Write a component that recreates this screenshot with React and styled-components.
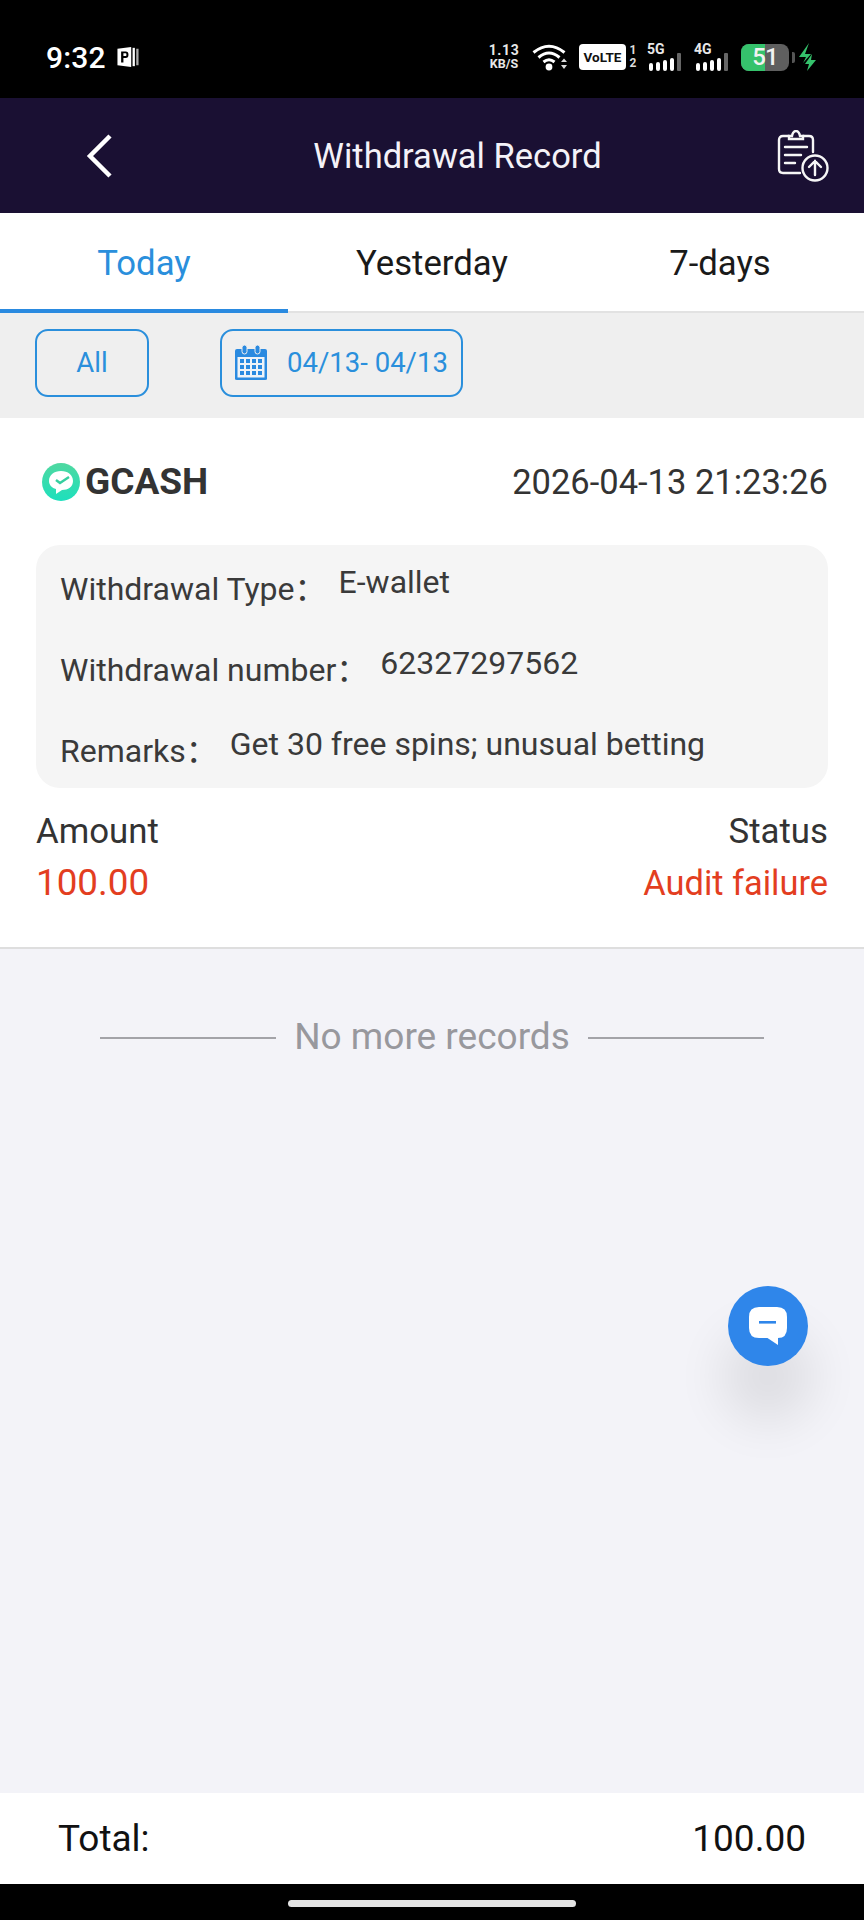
import styled, { createGlobalStyle } from "styled-components";

const GlobalStyle = createGlobalStyle`
  html, body {
    margin: 0;
    padding: 0;
    background: #000;
  }
  body {
    font-family: Roboto, "Noto Sans CJK SC", sans-serif;
  }
`;

const Page = styled.div`
  position: relative;
  display: flex;
  flex-direction: column;
  width: 864px;
  height: 1920px;
  overflow: hidden;
  background: #f3f3f8;
`;

const StatusBar = styled.div`
  display: flex;
  align-items: center;
  justify-content: space-between;
  height: 98px;
  padding: 16px 48px 0 46px;
  box-sizing: border-box;
  background: #000;
  color: #fff;
`;

const StatusLeft = styled.div`
  display: flex;
  align-items: center;
  gap: 10px;
`;

const Clock = styled.span`
  font-size: 30px;
  font-weight: 500;
  letter-spacing: 0.2px;
`;

const StatusRight = styled.div`
  display: flex;
  align-items: center;
`;

const NetSpeed = styled.div`
  display: flex;
  flex-direction: column;
  align-items: center;
  width: 30px;
  margin-right: 13px;
  font-weight: 700;
  color: #e8e8e8;
  line-height: 14px;
  span:first-child {
    font-size: 14px;
    letter-spacing: 0.6px;
  }
  span:last-child {
    font-size: 12.5px;
    white-space: nowrap;
  }
`;

const Volte = styled.span`
  display: flex;
  align-items: center;
  justify-content: center;
  width: 47px;
  height: 26px;
  margin-left: 11px;
  border-radius: 4px;
  background: #fff;
  color: #111;
  font-size: 13.5px;
  font-weight: 700;
`;

const SimNumbers = styled.div`
  display: flex;
  flex-direction: column;
  align-items: center;
  width: 10px;
  margin: 0 9px 0 2px;
  font-size: 12px;
  line-height: 13px;
  font-weight: 700;
  color: #ddd;
`;

const Signal = styled.div`
  position: relative;
  width: 35px;
  height: 28px;
  margin-right: 12px;
`;

const SignalLabel = styled.span`
  position: absolute;
  left: 0;
  top: -1px;
  font-size: 14px;
  line-height: 14px;
  font-weight: 700;
  color: #e8e8e8;
`;

const Battery = styled.div`
  position: relative;
  display: flex;
  align-items: center;
  justify-content: center;
  width: 48px;
  height: 27px;
  overflow: hidden;
  border-radius: 8px;
  background: #5f5f5f;
  color: #f2f2f2;
  font-size: 24px;
  font-weight: 500;
  letter-spacing: -1px;
`;

const BatteryFill = styled.div`
  position: absolute;
  left: 0;
  top: 0;
  bottom: 0;
  background: #35c26c;
`;

const BatteryText = styled.span`
  position: relative;
`;

const BatteryCap = styled.div`
  width: 3px;
  height: 11px;
  margin: 0 3px 0 3px;
  border-radius: 0 2px 2px 0;
  background: #555;
`;

const Header = styled.header`
  display: grid;
  grid-template-columns: 1fr auto 1fr;
  align-items: center;
  height: 115px;
  padding: 0 35px 0 86px;
  box-sizing: border-box;
  background: #1a1033;
  color: #fff;
`;

const HeaderTitle = styled.h1`
  margin: 0;
  font-size: 34.5px;
  font-weight: 400;
  color: #f4f2f8;
`;

const HeaderAction = styled.div`
  display: flex;
  justify-content: flex-end;
`;

const Tabs = styled.nav`
  display: flex;
  height: 100px;
  box-sizing: border-box;
  background: #fff;
  border-bottom: 2px solid #e2e2e2;
`;

const Tab = styled.div`
  position: relative;
  flex: 1;
  display: flex;
  align-items: center;
  justify-content: center;
  padding-top: 1px;
  font-size: 34.7px;
  color: ${(props) => (props.$active ? "#2a8fdc" : "#1a1a1a")};
  ${(props) =>
    props.$active &&
    `
    &::after {
      content: "";
      position: absolute;
      left: 0;
      right: 0;
      bottom: -2px;
      height: 4px;
      background: #2a8ae0;
    }
  `}
`;

const FilterBar = styled.div`
  display: flex;
  align-items: center;
  gap: 71px;
  height: 105px;
  padding: 0 0 6px 35px;
  box-sizing: border-box;
  background: #efefef;
`;

const FilterButton = styled.div`
  display: flex;
  align-items: center;
  justify-content: center;
  gap: 20px;
  height: 68px;
  box-sizing: border-box;
  width: ${(props) => props.$width}px;
  border: 2px solid #2a8fdc;
  border-radius: 13px;
  color: #2a8fdc;
  font-size: 27.5px;
  white-space: nowrap;
`;

const Card = styled.section`
  height: 531px;
  padding: 0 36px;
  box-sizing: border-box;
  background: #fff;
  border-bottom: 2px solid #dedede;
`;

const CardTop = styled.div`
  display: flex;
  align-items: center;
  justify-content: space-between;
  height: 127px;
  color: #333;
`;

const Brand = styled.div`
  display: flex;
  align-items: center;
  gap: 5px;
  margin-left: 6px;
  font-size: 37px;
  font-weight: 700;
  color: #333;
`;

const DateTime = styled.span`
  font-size: 34.5px;
  color: #333;
`;

const Details = styled.div`
  display: flex;
  flex-direction: column;
  justify-content: space-around;
  height: 243px;
  padding: 0 24px;
  box-sizing: border-box;
  border-radius: 24px;
  background: #f5f5f5;
`;

const DetailRow = styled.div`
  display: flex;
  font-size: 32px;
  color: #3a3a3a;
`;

const DetailLabel = styled.span`
  margin-right: 12px;
`;

const Summary = styled.div`
  display: flex;
  justify-content: space-between;
  margin-top: 24px;
`;

const SummaryColumn = styled.div`
  display: flex;
  flex-direction: column;
  gap: 14px;
  align-items: ${(props) => (props.$right ? "flex-end" : "flex-start")};
`;

const SummaryLabel = styled.span`
  font-size: 34.8px;
  line-height: 38px;
  color: #333;
`;

const SummaryValue = styled.span`
  font-size: ${(props) => props.$size}px;
  line-height: 38px;
  color: #e33e1f;
`;

const Content = styled.main`
  flex: 1;
`;

const NoMore = styled.div`
  display: flex;
  align-items: center;
  justify-content: center;
  gap: 18px;
  height: 90px;
  margin-top: 42px;
  color: #98989d;
  font-size: 37px;
`;

const NoMoreLine = styled.span`
  width: 176px;
  height: 2px;
  margin-top: 4px;
  background: #a3a3a8;
`;

const Footer = styled.footer`
  display: flex;
  align-items: center;
  justify-content: space-between;
  height: 91px;
  padding: 0 58px;
  box-sizing: border-box;
  background: #fff;
  font-size: 37px;
  color: #111;
`;

const NavBar = styled.div`
  display: flex;
  justify-content: center;
  height: 36px;
  padding-top: 16px;
  box-sizing: border-box;
  background: #000;
`;

const HomeIndicator = styled.div`
  width: 288px;
  height: 7px;
  border-radius: 4px;
  background: #e4e4e4;
`;

const ChatButton = styled.div`
  position: absolute;
  left: 728px;
  top: 1286px;
  display: flex;
  align-items: center;
  justify-content: center;
  width: 80px;
  height: 80px;
  border-radius: 50%;
  background: #2f86ea;
  box-shadow: 0 50px 50px 6px rgba(0, 0, 0, 0.09);
`;

const ParkingIcon = () => (
  <svg width="24" height="22" viewBox="0 0 25 24">
    <path d="M1 3 L16 1 V23 L1 21 Z" fill="#fff" />
    <path d="M5 18 V6 H10 Q13 6 13 9.5 Q13 13 10 13 H7.5 V18 Z M7.5 8 V11 H10 Q10.8 11 10.8 9.5 Q10.8 8 10 8 Z" fill="#000" />
    <rect x="17.5" y="2" width="2.5" height="20" fill="#fff" />
    <rect x="21.5" y="3" width="2.5" height="18" fill="#aaa" />
  </svg>
);

const WifiIcon = () => (
  <svg width="36" height="28" viewBox="0 0 36 28" fill="none">
    <path d="M1.5 9.5 Q17 -3 32.5 9.5" stroke="#fff" strokeWidth="3" />
    <path d="M6.5 14.5 Q17 5.5 27.5 14.5" stroke="#fff" strokeWidth="3" />
    <path d="M11.5 19 Q17 14.5 22.5 19" stroke="#fff" strokeWidth="3" />
    <circle cx="17" cy="24" r="3.4" fill="#fff" />
    <path d="M29 19 L32 15.5 L35 19 Z" fill="#ddd" />
    <path d="M29 22 H35 L32 26 Z" fill="#ddd" />
  </svg>
);

const SignalBars = () => (
  <svg width="35" height="19" viewBox="0 0 35 19" style={{ position: "absolute", left: 0, bottom: 0 }}>
    <rect x="2" y="11" width="4" height="8" rx="2" fill="#fff" />
    <rect x="9" y="10" width="4" height="9" rx="2" fill="#fff" />
    <rect x="16" y="8" width="4" height="11" rx="2" fill="#fff" />
    <rect x="23" y="6" width="4" height="13" rx="2" fill="#fff" />
    <rect x="30" y="1" width="4" height="18" rx="1" fill="#666" />
  </svg>
);

const BoltIcon = () => (
  <svg width="18" height="28" viewBox="0 0 18 28">
    <path d="M11 0 L1 14 H8 L5 20 L13 11 H7 Z" fill="#35c26c" />
    <path d="M14 11 L7 21 H11 L9 28 L18 17 H13 Z" fill="#35c26c" />
  </svg>
);

const BackIcon = () => (
  <svg width="26" height="44" viewBox="0 0 26 44" fill="none">
    <path d="M24 2 L4 22 L24 42" stroke="#fff" strokeWidth="4.5" />
  </svg>
);

const ClipboardUpload = () => (
  <svg width="52" height="52" viewBox="0 0 52 52" fill="none" stroke="#f6f6f6" strokeWidth="2.4" strokeLinecap="round">
    <path d="M12 6 H6 Q2 6 2 10 V39 Q2 43 6 43 H23" />
    <path d="M26 6 H32 Q36 6 36 10 V22" />
    <path d="M12 9 V6 H15 Q16 1 19 1 Q22 1 23 6 H26 V9 Z" />
    <path d="M8 17 H30 M8 25 H24 M8 33 H18" />
    <circle cx="38" cy="38" r="12.5" />
    <path d="M38 45 V31 M32 37 L38 31 L44 37" />
  </svg>
);

const CalendarIcon = () => (
  <svg width="32" height="36" viewBox="0 0 32 36">
    <path d="M2 4 H30 Q32 4 32 6 V34 Q32 35 30 35 H2 Q0 35 0 34 V6 Q0 4 2 4 Z" fill="#2a8ae0" />
    <rect x="2.5" y="12" width="27" height="20.5" fill="#eef3f8" />
    <rect x="7" y="0" width="5" height="9" rx="2.5" fill="#2a8ae0" stroke="#efefef" strokeWidth="1" />
    <rect x="20" y="0" width="5" height="9" rx="2.5" fill="#2a8ae0" stroke="#efefef" strokeWidth="1" />
    {[14, 20, 26].map((y) =>
      [5, 11, 17, 23].map((x) => (
        <rect key={`${x}-${y}`} x={x} y={y} width="4" height="4" fill="#2a8ae0" />
      ))
    )}
  </svg>
);

const GcashLogo = () => (
  <svg width="38" height="38" viewBox="0 0 38 38">
    <defs>
      <linearGradient id="gcashFill" x1="0" y1="0" x2="0" y2="1">
        <stop offset="0" stopColor="#4fd8a0" />
        <stop offset="1" stopColor="#1de0bd" />
      </linearGradient>
    </defs>
    <circle cx="19" cy="19" r="19" fill="url(#gcashFill)" />
    <path d="M19 8 C26 8 31 12 31 18 C31 24 26 27 20 27 L14 31 L14 26 C10 25 7 22 7 18 C7 12 12 8 19 8 Z" fill="#fff" />
    <path d="M14 17 L18 20 L27 14" stroke="#35cf9f" strokeWidth="2.4" fill="none" />
  </svg>
);

const ChatIcon = () => (
  <svg width="40" height="40" viewBox="0 0 40 40">
    <path d="M11 1 H29 Q39 1 39 11 V22 Q39 32 30 32 L30 39 L19.5 32 H11 Q1 32 1 22 V11 Q1 1 11 1 Z" fill="#fff" />
    <rect x="11" y="15" width="17" height="2.6" fill="#2f86ea" />
  </svg>
);

const details = [
  { label: "Withdrawal Type：", value: "E-wallet" },
  { label: "Withdrawal number：", value: "62327297562" },
  { label: "Remarks：", value: "Get 30 free spins; unusual betting" },
];

const App = () => {
  return (
    <Page>
      <GlobalStyle />
      <StatusBar>
        <StatusLeft>
          <Clock>9:32</Clock>
          <ParkingIcon />
        </StatusLeft>
        <StatusRight>
          <NetSpeed>
            <span>1.13</span>
            <span>KB/S</span>
          </NetSpeed>
          <WifiIcon />
          <Volte>VoLTE</Volte>
          <SimNumbers>
            <span>1</span>
            <span>2</span>
          </SimNumbers>
          <Signal>
            <SignalLabel>5G</SignalLabel>
            <SignalBars />
          </Signal>
          <Signal>
            <SignalLabel>4G</SignalLabel>
            <SignalBars />
          </Signal>
          <Battery>
            <BatteryFill style={{ width: "51%" }} />
            <BatteryText>51</BatteryText>
          </Battery>
          <BatteryCap />
          <BoltIcon />
        </StatusRight>
      </StatusBar>

      <Header>
        <BackIcon />
        <HeaderTitle>Withdrawal Record</HeaderTitle>
        <HeaderAction>
          <ClipboardUpload />
        </HeaderAction>
      </Header>

      <Tabs>
        <Tab $active>Today</Tab>
        <Tab>Yesterday</Tab>
        <Tab>7-days</Tab>
      </Tabs>

      <FilterBar>
        <FilterButton $width={114}>All</FilterButton>
        <FilterButton $width={243}>
          <CalendarIcon />
          04/13- 04/13
        </FilterButton>
      </FilterBar>

      <Card>
        <CardTop>
          <Brand>
            <GcashLogo />
            GCASH
          </Brand>
          <DateTime>2026-04-13 21:23:26</DateTime>
        </CardTop>
        <Details>
          {details.map((row) => (
            <DetailRow key={row.label}>
              <DetailLabel>{row.label}</DetailLabel>
              {row.value}
            </DetailRow>
          ))}
        </Details>
        <Summary>
          <SummaryColumn>
            <SummaryLabel>Amount</SummaryLabel>
            <SummaryValue $size={36.8}>100.00</SummaryValue>
          </SummaryColumn>
          <SummaryColumn $right>
            <SummaryLabel>Status</SummaryLabel>
            <SummaryValue $size={34.4}>Audit failure</SummaryValue>
          </SummaryColumn>
        </Summary>
      </Card>

      <Content>
        <NoMore>
          <NoMoreLine />
          No more records
          <NoMoreLine />
        </NoMore>
      </Content>

      <ChatButton>
        <ChatIcon />
      </ChatButton>

      <Footer>
        <span>Total:</span>
        <span>100.00</span>
      </Footer>
      <NavBar>
        <HomeIndicator />
      </NavBar>
    </Page>
  );
};

export default App;
